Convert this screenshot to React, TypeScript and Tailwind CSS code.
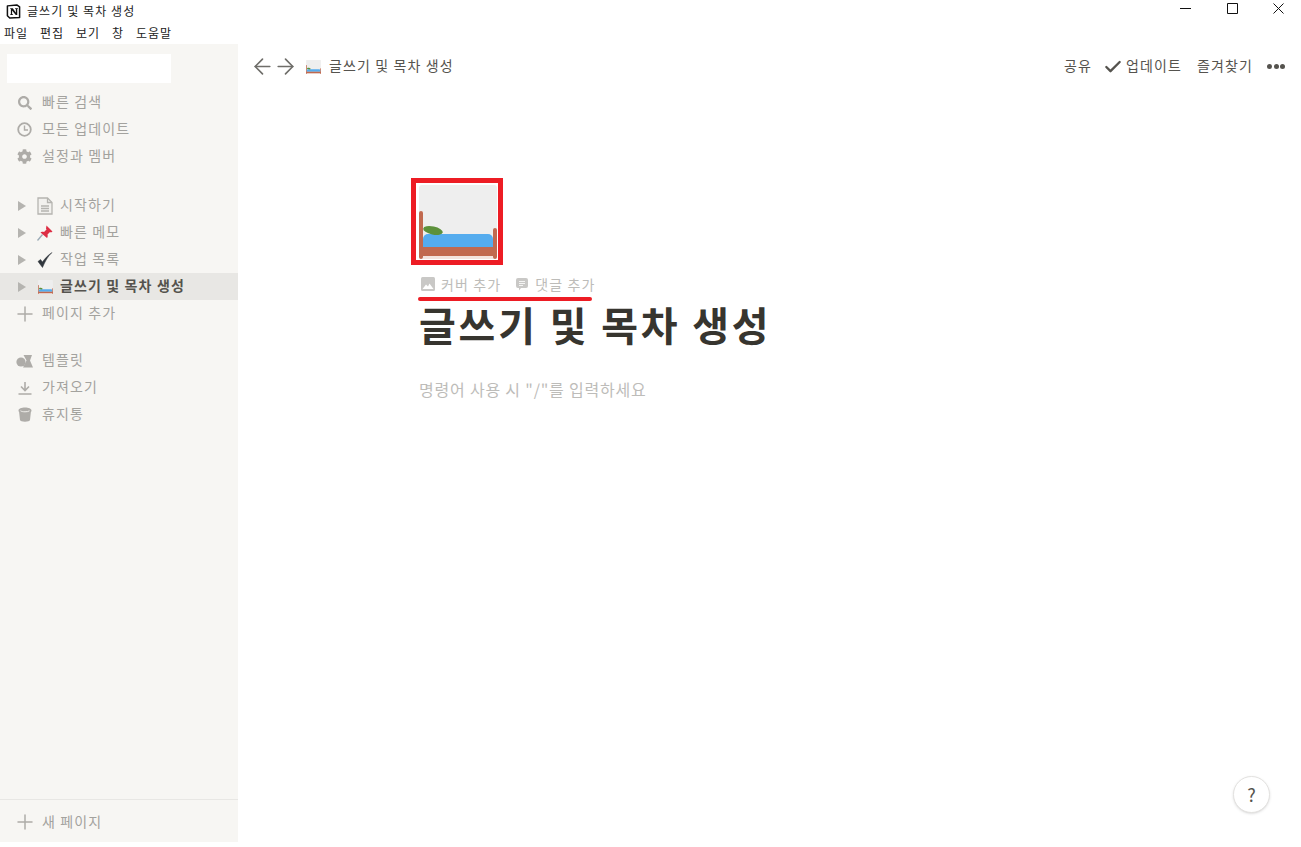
import { ArrowLeft, ArrowRight, Check, Plus } from "lucide-react";
import { FaCog, FaSearch } from "react-icons/fa";

function BedIcon({ className }: { className?: string }) {
  return (
    <svg viewBox="0 0 78 74" className={className}>
      <rect x="0" y="0" width="78" height="74" rx="3" fill="#eeeeee" />
      <rect x="0" y="26" width="4" height="48" rx="2" fill="#c1694f" />
      <rect x="74" y="43" width="4" height="31" rx="2" fill="#c1694f" />
      <path d="M4 62V54a5 5 0 0 1 5-5h60a5 5 0 0 1 5 5v8z" fill="#55acee" />
      <ellipse cx="14" cy="45.5" rx="10" ry="4" fill="#5c913b" transform="rotate(12 14 45.5)" />
      <rect x="0" y="62" width="78" height="9" fill="#c1694f" />
      <rect x="4" y="71" width="70" height="3" fill="#f3e3de" />
    </svg>
  );
}

function DocIcon() {
  return (
    <svg viewBox="0 0 16 18" className="w-[16px] h-[18px] shrink-0" fill="none" stroke="#b5b4b0" strokeWidth="1.3">
      <path d="M1 1h9.500l4.500 4.500V17H1z" fill="#f2f1ee" />
      <path d="M10.500 1v4.500H15M4 9h8M4 11.500h8M4 14h8" />
    </svg>
  );
}

function PinIcon() {
  return (
    <svg viewBox="0 0 16 16" className="w-[16px] h-[16px] shrink-0">
      <path d="M0.500 15.500l5-6" stroke="#99aab5" strokeWidth="1.300" />
      <path d="M9.500 0.500l6 6-1.500 1-1-.5-2.500 2.500c.5 1.500 0 3-.5 3.500L3.500 7.500c.5-.5 2-1 3.500-.5l2.500-2.500-.5-1z" fill="#dd2e44" />
    </svg>
  );
}

function CheckMark() {
  return (
    <svg viewBox="0 0 16 16" className="w-[16px] h-[16px] shrink-0">
      <path d="M1 9.500l4.500 6C8 9.500 11 4 15 0.500 10.500 3.500 7.500 7 5.500 10L3.500 7.500z" fill="#31373d" stroke="#31373d" strokeWidth="0.500" />
    </svg>
  );
}

function ClockIcon() {
  return (
    <svg viewBox="0 0 15 15" className="w-[15px] h-[15px]" fill="none" stroke="#aeaca8">
      <circle cx="7.500" cy="7.500" r="6.300" strokeWidth="1.800" />
      <path d="M7.500 3.500v4.500h3.500" strokeWidth="1.400" />
    </svg>
  );
}

function TemplateIcon() {
  return (
    <svg viewBox="0 0 17 14" className="w-[17px] h-[14px]" fill="#aeaca8">
      <circle cx="5" cy="8" r="4.600" />
      <path d="M7.500 1h8.500l-2 5.500L17 13.500H7l3.500-7z" />
    </svg>
  );
}

function ImportIcon() {
  return (
    <svg viewBox="0 0 14 14" className="w-[14px] h-[14px]" fill="none" stroke="#aeaca8" strokeWidth="1.600">
      <path d="M7 1v8M3 5.500L7 9.500l4-4M0.500 13h13" />
    </svg>
  );
}

function TrashIcon() {
  return (
    <svg viewBox="0 0 14 15" className="w-[14px] h-[15px]" fill="#aeaca8">
      <path d="M0.500 3.500C0.500 1.500 3.500 0.500 7 0.500s6.500 1 6.500 3c0 .8-.3 1.200-.6 1.600L12 13c-.2 1.200-2.400 1.700-5 1.700S2.200 14.200 2 13L1.100 5.100C.8 4.700.5 4.300.5 3.500z" />
      <path d="M2.500 3.800c1 .7 2.700 1 4.500 1s3.500-.3 4.500-1" stroke="#f7f6f3" strokeWidth="0.900" fill="none" />
    </svg>
  );
}

function NotionLogo() {
  return (
    <svg viewBox="0 0 16 16" className="w-[15px] h-[15px]">
      <path d="M1.500 2L11.500 1 14.500 3V14.500L4 15 1.500 12.500z" fill="#ffffff" stroke="#111111" strokeWidth="1.600" strokeLinejoin="round" />
      <path d="M4.500 4.500h2.800l3.200 4.800V5.300h-.8v-.8h3v.8h-.7v6.500h-1.600L6.500 7v3.800h1v.8H4.500v-.8h.7V5.300h-.7z" fill="#111111" />
    </svg>
  );
}

function SideRow({ icon, label }: { icon: React.ReactNode; label: string }) {
  return (
    <div className="flex items-center h-[27px] pl-4 text-[14px] tracking-[0.08em] text-[#a3a29e]">
      <span className="w-[17px] flex justify-center text-[#aeaca8]">{icon}</span>
      <span className="ml-[9px] mb-[2px]">{label}</span>
    </div>
  );
}

function PageRow({ icon, label, active }: { icon: React.ReactNode; label: string; active?: boolean }) {
  return (
    <div className={active ? "flex items-center h-[27px] pl-[18px] text-[14px] tracking-[0.08em] font-bold text-[#55534e] bg-[#e8e7e4]" : "flex items-center h-[27px] pl-[18px] text-[14px] tracking-[0.08em] text-[#a3a29e]"}>
      <span className="w-0 h-0 border-y-[5px] border-y-transparent border-l-[8px] border-l-[#b5b4b0]" />
      <span className="ml-[11px] w-[16px] flex justify-center">{icon}</span>
      <span className="ml-[7px] mb-[2px]">{label}</span>
    </div>
  );
}

export default function App() {
  return (
    <div className="relative w-[1301px] h-[847px] bg-white overflow-hidden font-['Noto_Sans_CJK_KR','Liberation_Sans',sans-serif]">
      <div className="flex items-center h-[22px] pl-[6px] text-[12px] tracking-[0.09em] text-[#222222]">
        <NotionLogo />
        <span className="ml-[6px]">글쓰기 및 목차 생성</span>
        <div className="ml-auto flex items-center pb-[6px]">
          <span className="w-[46px] pr-[2px] flex justify-center">
            <svg viewBox="0 0 11 11" className="w-[11px] h-[11px]" fill="none" stroke="#111111"><path d="M0 5.500h11" /></svg>
          </span>
          <span className="w-[46px] flex justify-center">
            <svg viewBox="0 0 11 11" className="w-[11px] h-[11px]" fill="none" stroke="#111111"><path d="M0.500 0.500h10v10h-10z" /></svg>
          </span>
          <span className="w-[46px] flex justify-center">
            <svg viewBox="0 0 11 11" className="w-[11px] h-[11px]" fill="none" stroke="#111111"><path d="M0.500 0.500l10 10M10.500 0.500l-10 10" /></svg>
          </span>
        </div>
      </div>
      <div className="flex items-center gap-[12px] h-[22px] pl-1 text-[12px] tracking-[0.08em] text-[#222222]">
        <span>파일</span>
        <span>편집</span>
        <span>보기</span>
        <span>창</span>
        <span>도움말</span>
      </div>

      <div className="flex h-[798px]">
        <aside className="w-[238px] shrink-0 bg-[#f7f6f3] flex flex-col">
          <div className="mt-[10px] ml-[7px] w-[164px] h-[29px] bg-white" />
          <div className="mt-[6px]">
            <SideRow icon={<FaSearch size={14} />} label="빠른 검색" />
            <SideRow icon={<ClockIcon />} label="모든 업데이트" />
            <SideRow icon={<FaCog size={15} />} label="설정과 멤버" />
          </div>
          <div className="mt-[22px]">
            <PageRow icon={<DocIcon />} label="시작하기" />
            <PageRow icon={<PinIcon />} label="빠른 메모" />
            <PageRow icon={<CheckMark />} label="작업 목록" />
            <PageRow icon={<BedIcon className="w-[15px] h-[14px]" />} label="글쓰기 및 목차 생성" active />
            <SideRow icon={<Plus size={24} strokeWidth={1.500} className="shrink-0" />} label="페이지 추가" />
          </div>
          <div className="mt-[20px]">
            <SideRow icon={<TemplateIcon />} label="템플릿" />
            <SideRow icon={<ImportIcon />} label="가져오기" />
            <SideRow icon={<TrashIcon />} label="휴지통" />
          </div>
          <div className="mt-auto h-[43px] pt-[2px] border-t border-[#e8e7e4] flex items-center">
            <div className="w-full">
              <SideRow icon={<Plus size={24} strokeWidth={1.500} className="shrink-0" />} label="새 페이지" />
            </div>
          </div>
        </aside>

        <main className="relative flex-1 min-w-0">
          <header className="flex items-center h-[45px] pl-3 pr-4 text-[14px] tracking-[0.08em] text-[#55534e]">
            <ArrowLeft size={25} strokeWidth={1.600} className="text-[#6f6e6a] shrink-0" />
            <ArrowRight size={25} strokeWidth={1.600} className="-ml-[2px] text-[#6f6e6a] shrink-0" />
            <BedIcon className="ml-[8px] w-[15px] h-[14px]" />
            <span className="ml-[8px] mb-[2px]">글쓰기 및 목차 생성</span>
            <div className="ml-auto flex items-center">
              <span className="mb-[2px]">공유</span>
              <Check size={20} strokeWidth={2.800} className="ml-[11px] text-[#55534e]" />
              <span className="ml-[3px] mb-[2px]">업데이트</span>
              <span className="ml-[15px] mb-[2px]">즐겨찾기</span>
              <span className="ml-[14px] flex gap-[1.5px]">
                <span className="w-[5px] h-[5px] rounded-full bg-[#55534e]" />
                <span className="w-[5px] h-[5px] rounded-full bg-[#55534e]" />
                <span className="w-[5px] h-[5px] rounded-full bg-[#55534e]" />
              </span>
            </div>
          </header>

          <div className="pl-[181px] pt-[96px]">
            <BedIcon className="w-[78px] h-[74px]" />
            <div className="mt-[15px] flex items-center h-[20px] pl-[2px] text-[14px] tracking-[0.08em] text-[#bdbcb9]">
              <svg viewBox="0 0 14 14" className="w-[14px] h-[14px]">
                <rect width="14" height="14" rx="1.500" fill="#c9c8c6" />
                <path d="M1.500 12l3.500-4.500 2 2 1.500-3 4 5.500z" fill="#ffffff" />
              </svg>
              <span className="ml-[6px]">커버 추가</span>
              <svg viewBox="0 0 14 14" className="ml-[14px] w-[14px] h-[14px]">
                <path d="M3 1h8a2 2 0 0 1 2 2v6a2 2 0 0 1-2 2H6l-2 2.500V11H3a2 2 0 0 1-2-2V3a2 2 0 0 1 2-2z" fill="#c9c8c6" />
                <path d="M4 4.500h6M4 6.500h6M4 8.500h4" stroke="#ffffff" strokeWidth="0.800" />
              </svg>
              <span className="ml-[6px]">댓글 추가</span>
            </div>
            <h1 className="mt-[6px] text-[40px] leading-[48px] font-bold tracking-[0.07em] text-[#37352f]">글쓰기 및 목차 생성</h1>
            <p className="mt-[29px] text-[16px] leading-[24px] tracking-[0.05em] text-[#bdbcb9]">명령어 사용 시 "/"를 입력하세요</p>
          </div>

          <div className="absolute left-[995px] top-[732px] w-[37px] h-[37px] rounded-full bg-white border border-[#e3e2e0] shadow-sm flex items-center justify-center text-[18px] text-[#55534e]">?</div>
        </main>
      </div>

      <div className="absolute left-[411px] top-[178px] w-[92px] h-[87px] border-[5px] border-[#ed1c24]" />
      <div className="absolute left-[418px] top-[297px] w-[174px] h-[4px] rounded-full bg-[#ed1c24]" />
    </div>
  );
}
